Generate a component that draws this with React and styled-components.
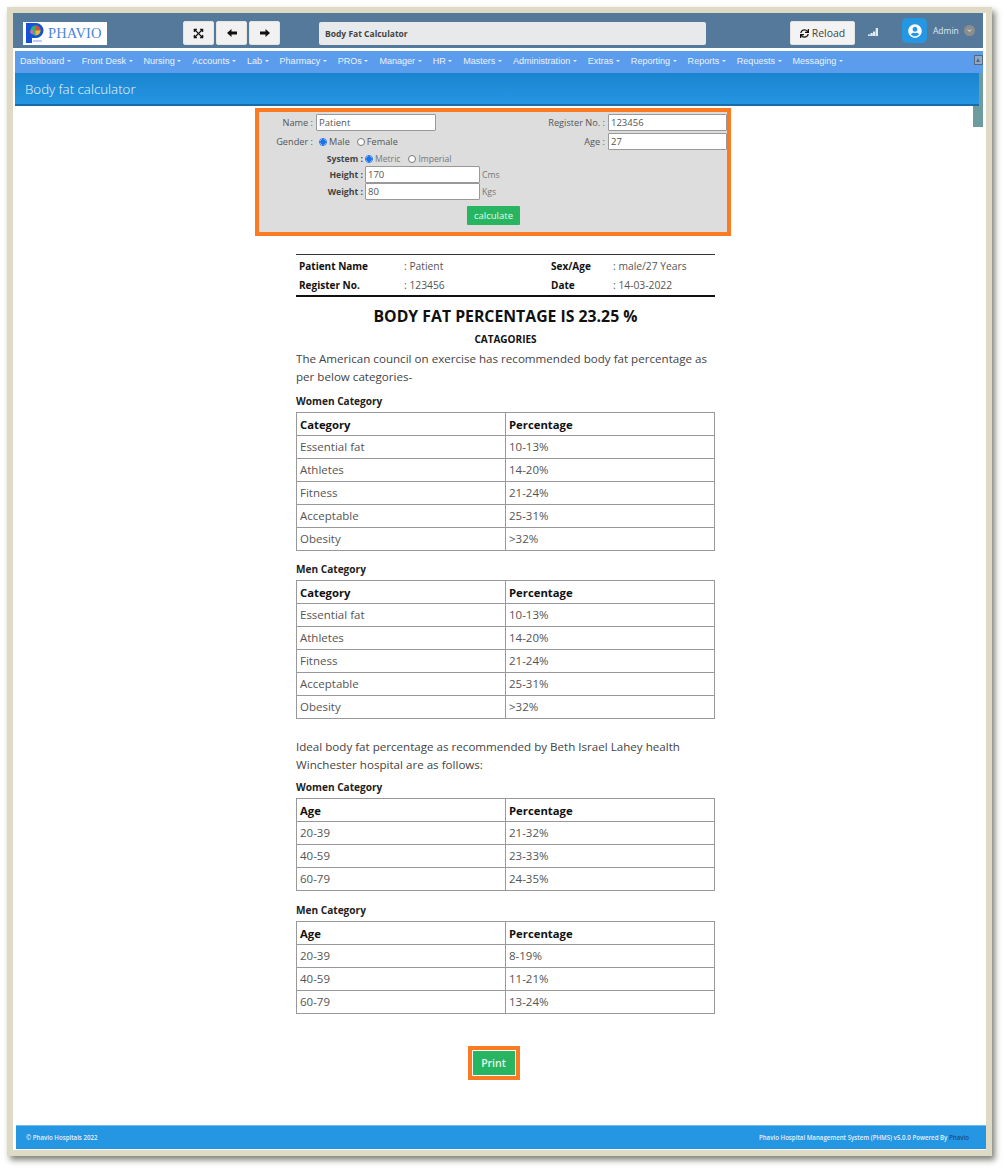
import React from 'react';
import styled, { createGlobalStyle } from 'styled-components';
import { FaExpandArrowsAlt, FaSync, FaUserCircle, FaChevronDown } from 'react-icons/fa';

const Global = createGlobalStyle`
  html, body { margin: 0; padding: 0; background: #fff; }
  body { font-family: "Open Sans", "Liberation Sans", sans-serif; color: #333; }
  * { box-sizing: border-box; }
`;

const Page = styled.div`
  width: 1007px;
  height: 1171px;
  padding: 7px 0 0 7px;
`;
const Frame = styled.div`
  position: relative;
  width: 985px;
  height: 1149px;
  background: #ffffff;
  border: 6px solid #dedac5;
  box-shadow: 3px 4px 6px rgba(60, 60, 50, 0.65);
  padding-right: 3px;
`;
const Header = styled.header`
  height: 35px;
  background: #55799b;
  display: flex;
  align-items: center;
  padding: 0 0 0 10px;
`;
const Logo = styled.div`
  width: 84px;
  height: 23px;
  margin-top: 5px;
  background: #fff;
  display: flex;
  align-items: center;
  padding-left: 3px;
  gap: 4px;
`;
const LogoText = styled.span`
  font-family: "Liberation Serif", serif;
  font-size: 14.5px;
  letter-spacing: 0.1px;
  color: #4a86dc;
  line-height: 1;
`;
const IconButtons = styled.div`
  display: flex;
  gap: 2px;
  margin-left: 76px;
  margin-top: 5px;
`;
const IconButton = styled.button`
  width: 31px;
  height: 24px;
  background: #f1f1f1;
  border: 1px solid #e4e4e4;
  border-radius: 2px;
  padding: 0;
  display: flex;
  align-items: center;
  justify-content: center;
  color: #111;
  font-size: 11px;
`;
const ArrowGlyph = styled.svg`
  width: 10px;
  height: 8px;
  transform: ${p => (p.$flip ? 'scaleX(-1)' : 'none')};
`;
const PageTitle = styled.div`
  width: 387px;
  height: 23px;
  margin: 5px 0 0 39px;
  background: #e8e9eb;
  border-radius: 2px;
  padding-left: 6px;
  display: flex;
  align-items: center;
  font-size: 8.5px;
  font-weight: 700;
  color: #444;
`;
const ReloadButton = styled.button`
  width: 65px;
  height: 24px;
  margin: 5px 0 0 84px;
  background: #f3f3f3;
  border: 1px solid #e4e4e4;
  border-radius: 2px;
  display: flex;
  align-items: center;
  justify-content: center;
  gap: 3px;
  padding: 0;
  font-family: "Open Sans", sans-serif;
  font-size: 10.5px;
  color: #444;
  svg { color: #111; font-size: 9px; }
`;
const Signal = styled.svg`
  width: 10px;
  height: 8px;
  margin: 2px 0 0 13px;
`;
const Avatar = styled.div`
  width: 25px;
  height: 25px;
  margin-left: 24px;
  border-radius: 5px;
  background: #2597e2;
  color: #fff;
  display: flex;
  align-items: center;
  justify-content: center;
  font-size: 14px;
`;
const UserName = styled.span`
  font-size: 8.5px;
  color: #dfe8f0;
  margin-left: 6px;
`;
const UserCaret = styled.span`
  width: 11px;
  height: 11px;
  margin-left: 5px;
  border-radius: 50%;
  background: #8d8d8d;
  color: #ddd;
  display: flex;
  align-items: center;
  justify-content: center;
  font-size: 5px;
`;
const Nav = styled.nav`
  position: relative;
  height: 22px;
  margin: 3px 0 0 2px;
  background: #5c9cec;
  display: flex;
  align-items: center;
  padding: 0 0 2px 5px;
  gap: 11px;
`;
const NavItem = styled.span`
  display: flex;
  align-items: center;
  gap: 2.5px;
  font-family: "Liberation Sans", Arial, sans-serif;
  font-size: 9.05px;
  color: #e9f2fc;
  white-space: nowrap;
  &::after {
    content: "";
    border-top: 2.5px solid #e9f2fc;
    border-left: 2.5px solid transparent;
    border-right: 2.5px solid transparent;
  }
`;
const Collapse = styled.span`
  position: absolute;
  right: 0;
  top: 4px;
  width: 9px;
  height: 10px;
  border: 1px solid #55697e;
  background: #8fa9c8;
  &::after {
    content: "";
    position: absolute;
    left: 1px;
    top: 2px;
    border-bottom: 4px solid #55697e;
    border-left: 2.5px solid transparent;
    border-right: 2.5px solid transparent;
  }
`;
const TitleBar = styled.div`
  position: relative;
  height: 33px;
  margin-left: 2px;
  background: linear-gradient(#1a84cf, #2596e2);
  border-bottom: 2px solid #1a6ba8;
  padding-left: 10px;
  display: flex;
  align-items: center;
  font-size: 13.3px;
  font-weight: 300;
  color: #eef6fc;
  &::after {
    content: "";
    position: absolute;
    right: 0;
    top: 0;
    bottom: -2px;
    width: 4px;
    background: #6d9c9f;
  }
`;
const Thumb = styled.div`
  position: absolute;
  right: 3px;
  top: 93px;
  width: 10px;
  height: 21px;
  background: #6d9c9f;
`;
const Main = styled.main`
  margin-left: 2px;
  padding-top: 2px;
`;
const FormPanel = styled.form`
  width: 476px;
  height: 128px;
  margin-left: 240px;
  border: 4px solid #fb7a22;
  background: #dddddd;
  padding: 1px 0 0 0;
  font-size: 9.2px;
  color: #555;
`;
const FormTopRow = styled.div`
  display: grid;
  grid-template-columns: 1fr auto;
  height: 19px;
  align-items: center;
`;
const Field = styled.label`
  display: flex;
  align-items: center;
  gap: 3px;
`;
const FieldLabel = styled.span`
  width: ${p => p.$w}px;
  text-align: right;
  white-space: nowrap;
`;
const TextBox = styled.input`
  width: ${p => p.$w}px;
  height: 17px;
  border: 1px solid #999;
  border-radius: 1px;
  background: #fff;
  padding: 0 2px;
  margin: 0;
  font-family: "Open Sans", sans-serif;
  font-size: 9.5px;
  color: #555;
  outline: none;
`;
const Radios = styled.span`
  display: flex;
  align-items: center;
  gap: 2px;
  margin-left: ${p => p.$indent || 0}px;
`;
const Radio = styled.span`
  width: 8px;
  height: 8px;
  border-radius: 50%;
  border: 1px solid ${p => (p.$on ? '#1a73e8' : '#777')};
  background: ${p => (p.$on ? 'radial-gradient(circle, #1a73e8 2.5px, #fff 3px)' : '#fff')};
  flex: none;
`;
const RadioLabel = styled.span`
  margin-right: ${p => (p.$muted ? 6 : 5)}px;
  color: ${p => (p.$muted ? '#777' : '#555')};
  font-size: ${p => (p.$muted ? '8.6px' : '9.2px')};
`;
const MeasureRow = styled.div`
  display: flex;
  align-items: center;
  gap: 2px;
  height: ${p => p.$h}px;
  font-size: 8.7px;
  color: #777;
`;
const MeasureLabel = styled.b`
  width: 104px;
  text-align: right;
  color: #444;
  font-weight: 700;
  white-space: nowrap;
`;
const SubmitRow = styled.div`
  display: flex;
  justify-content: center;
  padding: 6px 0 0 1px;
`;
const CalcButton = styled.button`
  width: 53px;
  height: 19px;
  border: none;
  border-radius: 1px;
  background: #27b561;
  color: #e8f8ee;
  padding: 0;
  font-family: "Open Sans", sans-serif;
  font-size: 9.5px;
`;
const Report = styled.section`
  width: 419px;
  margin: 18px 0 0 281px;
`;
const InfoBlock = styled.div`
  display: grid;
  grid-template-columns: 105px 147px 62px 1fr;
  grid-auto-rows: 19.5px;
  align-items: center;
  height: 43px;
  border-top: 1px solid #333;
  border-bottom: 2px solid #111;
  padding: 1px 0 0 3px;
  font-size: 10.3px;
  color: #555;
`;
const InfoKey = styled.b`
  color: #111;
  font-weight: 700;
  font-size: 10px;
`;
const Result = styled.h2`
  margin: 8px 0 0;
  font-size: 15.8px;
  line-height: 22px;
  font-weight: 700;
  text-align: center;
  color: #111;
`;
const Sub = styled.h3`
  margin: 5px 0 0;
  font-size: 10px;
  line-height: 14px;
  font-weight: 700;
  text-align: center;
  color: #111;
`;
const Para = styled.p`
  margin: ${p => p.$top}px 0 0;
  font-size: 11.6px;
  line-height: 18px;
  color: #444;
`;
const Caption = styled.h4`
  margin: ${p => p.$top}px 0 4px;
  font-size: 10.1px;
  line-height: 14px;
  font-weight: 700;
  color: #222;
`;
const Table = styled.table`
  width: 419px;
  border-collapse: collapse;
  table-layout: fixed;
  font-size: 11.5px;
`;
const Cell = styled.td`
  height: 23px;
  padding: 0 3px;
  border: 1px solid #999;
  color: #555;
  line-height: 16px;
`;
const Head = styled.th`
  height: 23px;
  padding: 0 3px;
  border: 1px solid #999;
  color: #111;
  font-weight: 700;
  font-size: 11.3px;
  text-align: left;
`;
const PrintWrap = styled.div`
  display: flex;
  justify-content: center;
  margin: 32px 0 0 -11px;
`;
const PrintButton = styled.button`
  width: 52px;
  height: 34px;
  border: 4px solid #fb7a22;
  background: #27b561;
  outline: 1px solid #fff;
  outline-offset: -5px;
  color: #e8f8ee;
  padding: 0;
  font-family: "Open Sans", sans-serif;
  font-size: 10.5px;
  font-weight: 600;
`;
const Footer = styled.footer`
  position: absolute;
  left: 3px;
  right: 0;
  bottom: 1px;
  height: 24px;
  background: #2596e2;
  border-top: 1px solid #6fbdf0;
  display: flex;
  align-items: center;
  justify-content: space-between;
  padding: 0 17px 0 10px;
  font-size: 6.15px;
  font-weight: 600;
  color: #e4f1fb;
`;
const Vendor = styled.span`
  color: #1c4f80;
`;

const menu = ['Dashboard', 'Front Desk', 'Nursing', 'Accounts', 'Lab', 'Pharmacy', 'PROs', 'Manager', 'HR', 'Masters', 'Administration', 'Extras', 'Reporting', 'Reports', 'Requests', 'Messaging'];
const cats = [['Essential fat', '10-13%'], ['Athletes', '14-20%'], ['Fitness', '21-24%'], ['Acceptable', '25-31%'], ['Obesity', '>32%']];
const womenAge = [['20-39', '21-32%'], ['40-59', '23-33%'], ['60-79', '24-35%']];
const menAge = [['20-39', '8-19%'], ['40-59', '11-21%'], ['60-79', '13-24%']];

const DataTable = ({ first, rows }) => (
  <Table>
    <thead>
      <tr><Head>{first}</Head><Head>Percentage</Head></tr>
    </thead>
    <tbody>
      {rows.map(r => (
        <tr key={r[0]}><Cell>{r[0]}</Cell><Cell>{r[1]}</Cell></tr>
      ))}
    </tbody>
  </Table>
);

const Arrow = ({ flip }) => (
  <ArrowGlyph $flip={flip} viewBox="0 0 10 8">
    <path d="M0 4 4.5 0V2.4H10V5.6H4.5V8Z" fill="#111" />
  </ArrowGlyph>
);

export default function App() {
  return (
    <Page>
      <Global />
      <Frame>
        <Header>
          <Logo>
            <svg width="18" height="21" viewBox="0 0 18 21">
              <path d="M0 0h10a7.5 7.5 0 0 1 0 15H6v5H0z" fill="#1652d8" />
              <circle cx="9.5" cy="7.5" r="5" fill="#2fb56a" />
              <path d="M9.5 2.5a5 5 0 0 1 5 5h-5z" fill="#e9453f" />
              <path d="M9.5 7.5h5a5 5 0 0 1-5 5z" fill="#f2b632" />
              <circle cx="6" cy="9" r="2" fill="#e060b0" />
              <path d="M7 17h9v2H7z" fill="#b9cdf0" />
            </svg>
            <LogoText>PHAVIO</LogoText>
          </Logo>
          <IconButtons>
            <IconButton aria-label="Fullscreen"><FaExpandArrowsAlt /></IconButton>
            <IconButton aria-label="Back"><Arrow /></IconButton>
            <IconButton aria-label="Forward"><Arrow flip /></IconButton>
          </IconButtons>
          <PageTitle>Body Fat Calculator</PageTitle>
          <ReloadButton><FaSync />Reload</ReloadButton>
          <Signal viewBox="0 0 10 8">
            <path d="M0 8h2.3V6.6H0zM2.5 8h2.3V5H2.5zM5 8h2.3V3.4H5zM7.7 8H10V0H7.7z" fill="#e4ebf2" />
          </Signal>
          <Avatar><FaUserCircle /></Avatar>
          <UserName>Admin</UserName>
          <UserCaret><FaChevronDown /></UserCaret>
        </Header>
        <Nav>
          {menu.map(m => <NavItem key={m}>{m}</NavItem>)}
          <Collapse />
        </Nav>
        <TitleBar>Body fat calculator</TitleBar>
        <Thumb />
        <Main>
          <FormPanel>
            <FormTopRow>
              <Field><FieldLabel $w={54}>Name :</FieldLabel><TextBox $w={120} defaultValue="Patient" /></Field>
              <Field><FieldLabel $w={60}>Register No. :</FieldLabel><TextBox $w={119} defaultValue="123456" /></Field>
            </FormTopRow>
            <FormTopRow>
              <Field>
                <FieldLabel $w={54}>Gender :</FieldLabel>
                <Radios $indent={3}><Radio $on /><RadioLabel>Male</RadioLabel><Radio /><RadioLabel>Female</RadioLabel></Radios>
              </Field>
              <Field><FieldLabel $w={60}>Age :</FieldLabel><TextBox $w={119} defaultValue="27" /></Field>
            </FormTopRow>
            <MeasureRow $h={15}>
              <MeasureLabel>System :</MeasureLabel>
              <Radios><Radio $on /><RadioLabel $muted>Metric</RadioLabel><Radio /><RadioLabel $muted>Imperial</RadioLabel></Radios>
            </MeasureRow>
            <MeasureRow $h={17}>
              <MeasureLabel>Height :</MeasureLabel><TextBox $w={115} defaultValue="170" /><span>Cms</span>
            </MeasureRow>
            <MeasureRow $h={17}>
              <MeasureLabel>Weight :</MeasureLabel><TextBox $w={115} defaultValue="80" /><span>Kgs</span>
            </MeasureRow>
            <SubmitRow><CalcButton type="button">calculate</CalcButton></SubmitRow>
          </FormPanel>
          <Report>
            <InfoBlock>
              <InfoKey>Patient Name</InfoKey><span>: Patient</span>
              <InfoKey>Sex/Age</InfoKey><span>: male/27 Years</span>
              <InfoKey>Register No.</InfoKey><span>: 123456</span>
              <InfoKey>Date</InfoKey><span>: 14-03-2022</span>
            </InfoBlock>
            <Result>BODY FAT PERCENTAGE IS 23.25 %</Result>
            <Sub>CATAGORIES</Sub>
            <Para $top={4}>The American council on exercise has recommended body fat percentage as per below categories-</Para>
            <Caption $top={8}>Women Category</Caption>
            <DataTable first="Category" rows={cats} />
            <Caption $top={11}>Men Category</Caption>
            <DataTable first="Category" rows={cats} />
            <Para $top={19}>Ideal body fat percentage as recommended by Beth Israel Lahey health Winchester hospital are as follows:</Para>
            <Caption $top={6}>Women Category</Caption>
            <DataTable first="Age" rows={womenAge} />
            <Caption $top={12}>Men Category</Caption>
            <DataTable first="Age" rows={menAge} />
          </Report>
          <PrintWrap><PrintButton type="button">Print</PrintButton></PrintWrap>
        </Main>
        <Footer>
          <span>© Phavio Hospitals 2022</span>
          <span>Phavio Hospital Management System (PHMS) v5.0.0 Powered By <Vendor>Phavio</Vendor></span>
        </Footer>
      </Frame>
    </Page>
  );
}
